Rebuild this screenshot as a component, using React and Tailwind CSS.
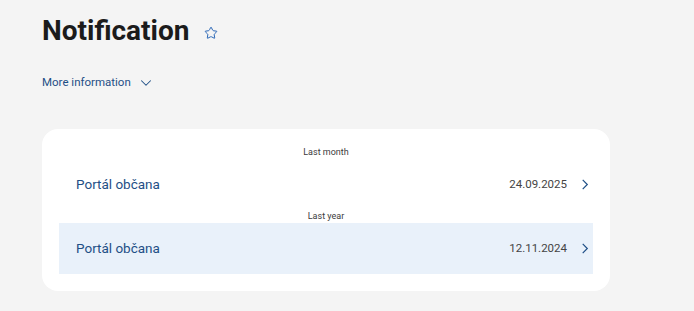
import { ChevronDown, Star } from "lucide-react";

const groups = [
  { label: "Last month", items: [{ title: "Portál občana", date: "24.09.2025", active: false }] },
  { label: "Last year", items: [{ title: "Portál občana", date: "12.11.2024", active: true }] },
];

export default function App() {
  return (
    <div className="min-h-[311px] bg-[#f4f4f4] px-[42px] pt-[13px] font-['Roboto',sans-serif]">
      {/* ================= HEADER ================= */}
      <div className="flex items-center gap-[15px]">
        <h1 className="text-[28px] font-bold leading-[36px] text-[#1b1b1b]">Notification</h1>
        <Star className="mt-[3px] h-[14px] w-[14px] text-[#2865b5]" strokeWidth={1.7} />
      </div>

      <button className="mt-[26px] flex h-[16px] items-center gap-[6px] text-[11.5px] text-[#1f4f86]">
        More information
        <ChevronDown className="h-[18px] w-[18px]" strokeWidth={1.4} />
      </button>

      {/* ================= LIST CARD ================= */}
      <div className="mt-[38px] w-[568px] rounded-[16px] bg-white p-[17px]">
        {groups.map((group) => (
          <div key={group.label}>
            <p className="h-[13px] text-center text-[9px] leading-[13px] text-[#3b3b3b]">{group.label}</p>
            {group.items.map((item, i) => (
              <Row key={i} {...item} />
            ))}
          </div>
        ))}
      </div>
    </div>
  );
}

/* ================= ROW ================= */
function Row({ title, date, active }) {
  return (
    <div
      className={`flex h-[51px] items-center justify-between pl-[17px] pr-[4px] ${
        active ? "bg-[#e9f1fa]" : ""
      }`}
    >
      <span className="text-[13.5px] text-[#1f4f86]">{title}</span>
      <div className="flex items-center gap-[14px]">
        <span className="text-[11.5px] text-[#444444]">{date}</span>
        <svg viewBox="0 0 8 12" className="h-[11px] w-[8px] text-[#1f4f86]" fill="none" stroke="currentColor" strokeWidth="1.3">
          <polyline points="1.5,1 6.5,6 1.5,11" />
        </svg>
      </div>
    </div>
  );
}
